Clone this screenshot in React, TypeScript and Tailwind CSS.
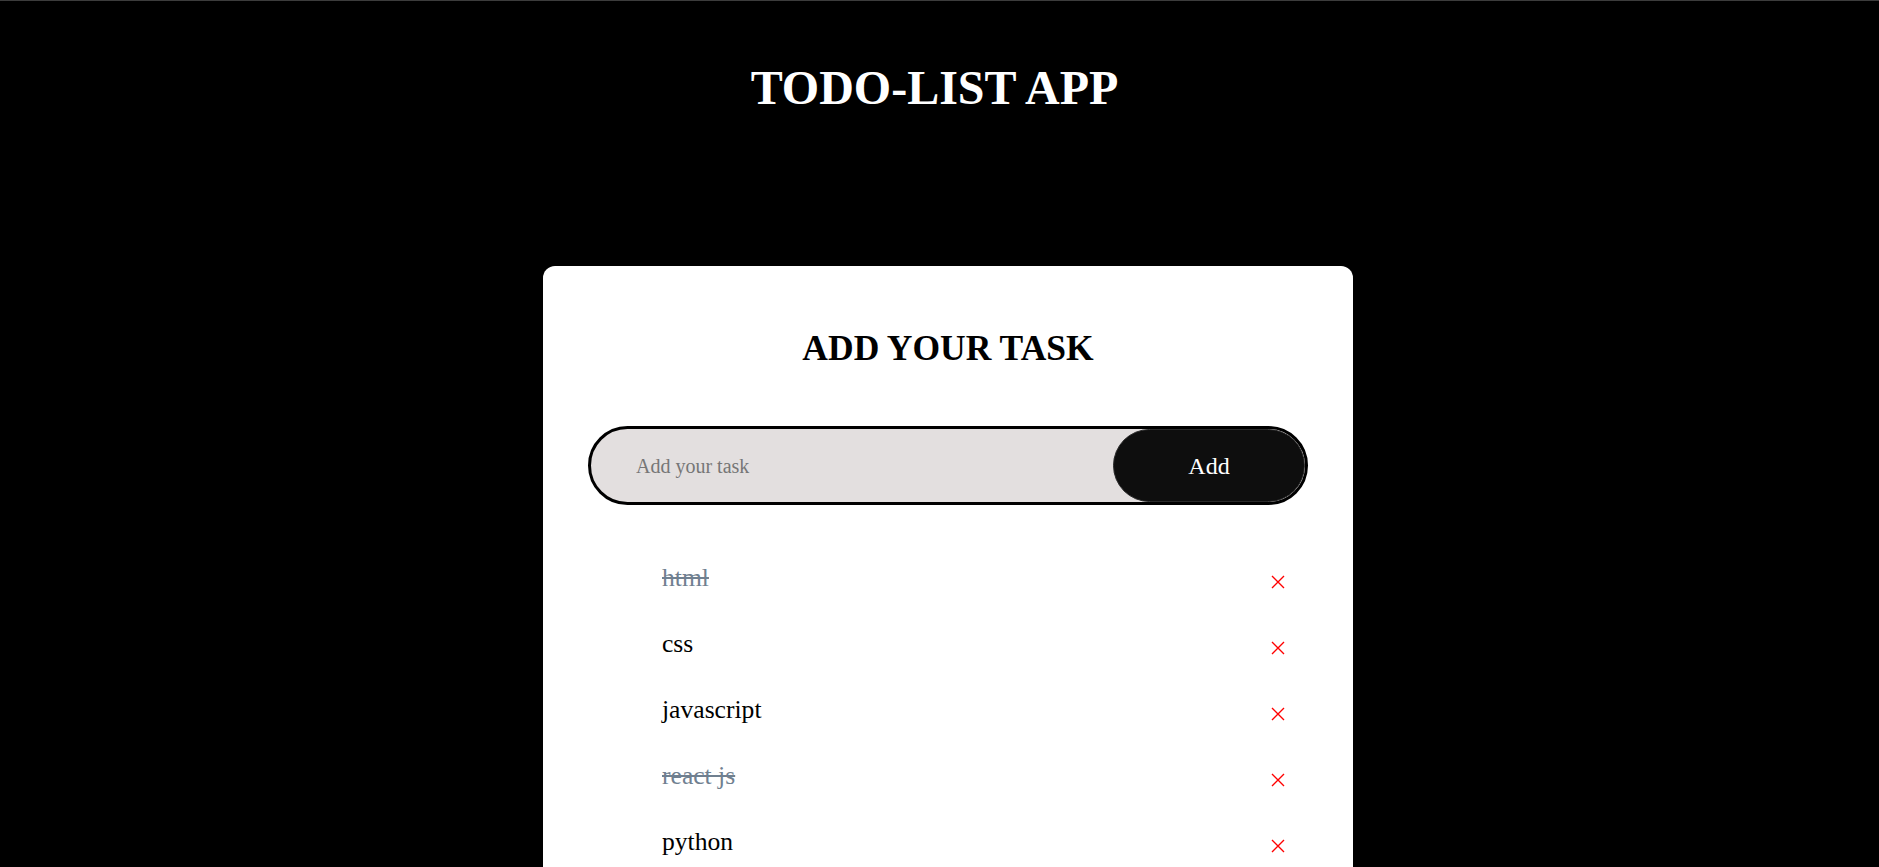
import { useState } from "react";

type Task = { id: number; text: string; done: boolean };

const initialTasks: Task[] = [
  { id: 1, text: "html", done: true },
  { id: 2, text: "css", done: false },
  { id: 3, text: "javascript", done: false },
  { id: 4, text: "react js", done: true },
  { id: 5, text: "python", done: false },
];

const CrossIcon = () => (
  <svg width="14" height="14" viewBox="0 0 14 14" fill="none">
    <path d="M1 1L13 13M13 1L1 13" stroke="#ff0000" strokeWidth="1.4" />
  </svg>
);

const App = () => {
  const [tasks, setTasks] = useState<Task[]>(initialTasks);
  const [value, setValue] = useState("");

  const addTask = () => {
    if (!value.trim()) return;
    setTasks([...tasks, { id: Date.now(), text: value.trim(), done: false }]);
    setValue("");
  };

  return (
    <main className="min-h-screen border-t border-[#3c3c3c] bg-black font-['Liberation_Serif',serif]">
      <h1 className="pr-[10px] pt-[60px] text-center text-[48px] font-bold leading-[53px] text-white">
        TODO-LIST APP
      </h1>
      <div className="mt-[152px] flex justify-center pl-[17px]">
        <div className="w-[810px] rounded-xl bg-white px-[45px] pb-[80px] pt-[62px]">
          <h2 className="text-center text-[35.5px] font-bold leading-[40px] text-black">
            ADD YOUR TASK
          </h2>
          <div className="mt-[58px] flex h-[79px] items-stretch overflow-hidden rounded-full border-[3px] border-black bg-[#e3dfdf]">
            <input
              value={value}
              onChange={(e) => setValue(e.target.value)}
              placeholder="Add your task"
              className="min-w-0 flex-1 bg-transparent pl-[45px] text-[20px] text-black outline-none placeholder:text-[#767676]"
            />
            <button
              onClick={addTask}
              className="w-[192px] rounded-full border border-[#2a2a2a] bg-[#0e0e0e] text-[24px] text-white"
            >
              Add
            </button>
          </div>
          <ul className="mt-[40px] pl-[74px] pr-[23px]">
            {tasks.map((t) => (
              <li key={t.id} className="flex h-[66px] items-center justify-between">
                <span
                  onClick={() =>
                    setTasks(tasks.map((x) => (x.id === t.id ? { ...x, done: !x.done } : x)))
                  }
                  className={
                    t.done
                      ? "cursor-pointer text-[25.6px] text-[#708090] line-through"
                      : "cursor-pointer text-[25.6px] text-black"
                  }
                >
                  {t.text}
                </span>
                <button
                  onClick={() => setTasks(tasks.filter((x) => x.id !== t.id))}
                  className="mt-[8px]"
                >
                  <CrossIcon />
                </button>
              </li>
            ))}
          </ul>
        </div>
      </div>
    </main>
  );
};

export default App;
